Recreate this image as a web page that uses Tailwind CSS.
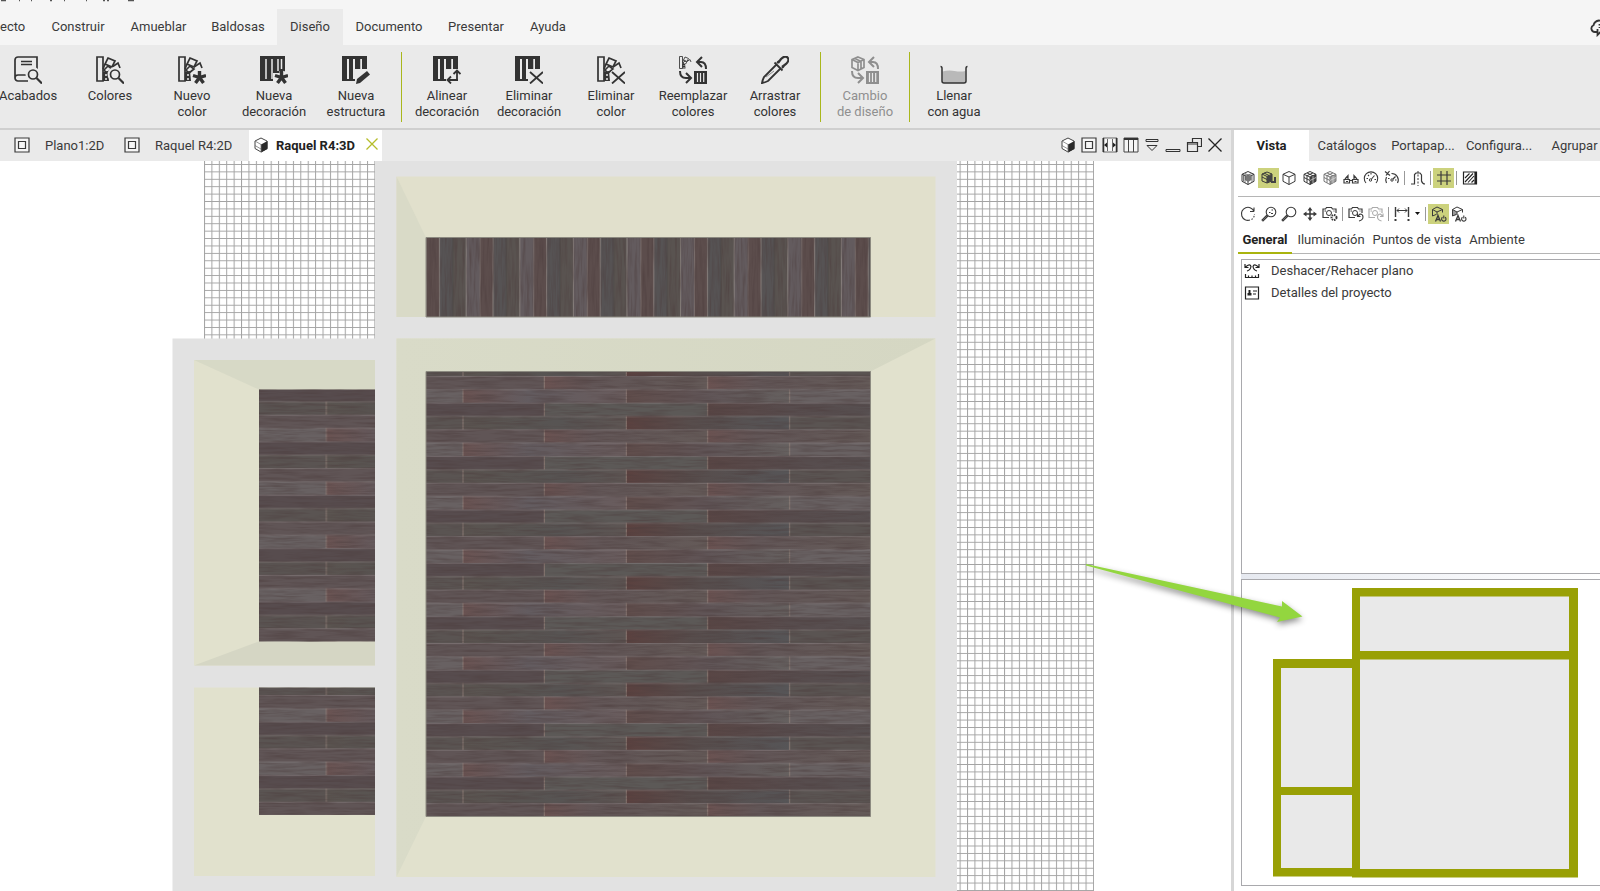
<!DOCTYPE html>
<html lang="es">
<head>
<meta charset="utf-8">
<title>Raquel R4:3D</title>
<script src="https://cdn.jsdelivr.net/npm/@tailwindcss/browser@4"></script>
</head>
<body class="bg-white font-['Roboto','Noto_Sans',sans-serif] text-[13px] leading-4 text-[#3a3a3a]">

<!-- Shared icon shapes -->
<svg class="hidden" aria-hidden="true">
  <defs>
    <symbol id="fan" viewBox="0 0 28 28">
      <g fill="none" stroke="currentColor" stroke-width="1.7">
        <path d="M1 1h6v24H1z"/>
        <path d="M12 2l7 3-3 6-7-3z"/>
        <path d="M9 8l-2 5M16 11l6-4 2 5"/>
        <path d="M8 14l4-4 4 3-5 4z"/>
      </g>
      <path d="M7 16l5-1 1 10H7z" fill="currentColor"/>
      <circle cx="10" cy="19" r="1" fill="#eaeaea"/><circle cx="10" cy="23" r="1" fill="#eaeaea"/>
    </symbol>
    <symbol id="planks" viewBox="0 0 28 28">
      <path d="M0 0h25v13h-5v-10h-1v10h-6V25H0z" fill="currentColor"/>
      <path d="M6 3v20M12 3v20" stroke="#eaeaea" stroke-width="2"/>
      <path d="M19 3v10" stroke="#eaeaea" stroke-width="1.5"/>
    </symbol>
    <symbol id="lens" viewBox="0 0 28 28">
      <circle cx="19" cy="18.500" r="5.500" fill="#eaeaea" stroke="#eaeaea" stroke-width="4"/>
      <circle cx="19" cy="18.500" r="4.500" fill="#eaeaea" stroke="currentColor" stroke-width="1.700"/>
      <path d="M22.500 22l5.500 5.500" stroke="currentColor" stroke-width="2.200"/>
    </symbol>
    <symbol id="star" viewBox="0 0 28 28">
      <path d="M21.500 15v13M15 19.500l13 4M28 19.500l-13 4M17.500 27l8-11" stroke="#eaeaea" stroke-width="4"/>
      <path d="M21.500 21.500V15M21.500 21.500l-6.500-2M21.500 21.500l6.500-2M21.500 21.500l-4 5.500M21.500 21.500l4 5.500" stroke="currentColor" stroke-width="3.400"/>
    </symbol>
    <symbol id="cross" viewBox="0 0 28 28">
      <path d="M15 15l13 13M28 15L15 28" stroke="#eaeaea" stroke-width="4"/>
      <path d="M15 16l13 11.500M28 16L15 27.500" stroke="currentColor" stroke-width="1.800"/>
    </symbol>
    <symbol id="swap" viewBox="0 0 28 28">
      <g fill="none" stroke="currentColor" stroke-width="2">
        <path d="M23 1l-5 5 5 5M18 6h4q5 0 5 7"/>
        <path d="M1 15q0 7 6 7h5M7 17l5 5-5 5"/>
      </g>
      <path d="M15 15h13v13H15z" fill="currentColor"/>
      <path d="M18.500 17v9M21.500 17v9M24.700 17v9" stroke="#eaeaea" stroke-width="1.200"/>
    </symbol>
    <symbol id="cubeSolid" viewBox="0 0 16 16">
      <path d="M8 1l6 3v7.500L8 15l-6-3.500V4z" fill="#fff" stroke="#444" stroke-width="1"/>
      <path d="M8 7.500l6.500-3.500v8L8 15.500z" fill="#2a2a2a"/>
      <path d="M2 4l6 3.500V15M2 8.500l6 3.500" fill="none" stroke="#777" stroke-width=".8"/>
    </symbol>
    <symbol id="frame2d" viewBox="0 0 16 16">
      <path d="M1 1h14v14H1zM4.500 4.500h7v7h-7z" fill="#f6f6f6" stroke="#3a3a3a" stroke-width="1.200"/>
    </symbol>
    <symbol id="cube" viewBox="0 0 16 16">
      <path d="M8 1.500l6 2.800v7L8 14.500l-6-3.200v-7zM2 4.300l6 2.700 6-2.700M8 7v7.500" fill="none" stroke="currentColor" stroke-width="1"/>
    </symbol>
    <symbol id="cam" viewBox="0 0 16 16">
      <path d="M1 12V3h2.500L4.500 1.500h5L10.500 3H14v4M1 11.500h6" fill="none" stroke="currentColor" stroke-width="1.200"/>
      <circle cx="7" cy="7" r="2.500" fill="none" stroke="currentColor"/>
      <path d="M2.500 5h1.500M11.500 5h1" stroke="currentColor"/>
    </symbol>
    <symbol id="cubeAuto" viewBox="0 0 16 16">
      <path d="M5 8.500L1.500 10V3.500L6 1l5.500 2.500v3M1.500 3.500L6 6l5.500-2.500M6 6v3" fill="none" stroke="currentColor" stroke-width="1"/>
      <path d="M4.500 15.500L7 9.500l2.500 6M5.500 13.500h3" fill="none" stroke="currentColor" stroke-width="1.300"/>
      <path d="M11.500 11.200a2.200 2.200 0 1 0 2.600 0M12.800 9.500v3" fill="none" stroke="currentColor" stroke-width="1.100"/>
    </symbol>
  </defs>
</svg>

<div class="relative flex h-screen flex-col overflow-hidden">

  <header class="flex h-[45px] shrink-0 flex-col bg-[#f5f5f5]">
    <svg class="h-[9px] w-[140px] shrink-0" viewBox="0 0 140 9" aria-hidden="true"><path d="M1 .5h5M19 .5h1M31 .5h1M50 .5h2M64 .5h1M86 .5h1M103 .5h2M107 .5h2M128 .5h6" stroke="#555" stroke-width="1.500"/></svg>
    <div class="flex min-h-0 flex-1 items-stretch justify-between overflow-hidden">
      <nav class="flex">
        <button class="w-[38px] text-left">ecto</button>
        <button class="w-[80px]">Construir</button>
        <button class="w-[81px]">Amueblar</button>
        <button class="w-[78px]">Baldosas</button>
        <button class="w-[66px] bg-[#eaeaea]">Diseño</button>
        <button class="w-[92px]">Documento</button>
        <button class="w-[82px]">Presentar</button>
        <button class="w-[62px]">Ayuda</button>
      </nav>
      <button class="w-[10px] overflow-hidden" aria-label="Nube"><svg class="h-5 w-5" viewBox="0 0 20 20" fill="none" stroke="#333" stroke-width="1.800"><path d="M7 15H5a3.500 3.500 0 0 1-1.500-6.700Q4.500 4 9 3.500 14 3.500 15 7M7.500 12v6l4-4"/><path d="M9.500 7v1.500M9.500 10v1"/></svg></button>
    </div>
  </header>

  <section class="flex h-[83px] shrink-0 overflow-hidden bg-[#eaeaea] text-[#333]" aria-label="Diseño">
    <button class="-ml-[13px] flex w-[82px] shrink-0 flex-col items-center gap-1 pt-[11px]">
      <svg class="h-7 w-7 shrink-0" viewBox="0 0 28 28"><path d="M14 25H4a3 3 0 0 1-3-3V4a3 3 0 0 1 3-3h19v12M1 22a3 3 0 0 1 3-3h9M7 5.500h11M7 8.500h11" fill="none" stroke="currentColor" stroke-width="1.700"/><use href="#lens"/></svg>
      <span>Acabados</span>
    </button>
    <button class="flex w-[82px] shrink-0 flex-col items-center gap-1 pt-[11px]">
      <svg class="h-7 w-7 shrink-0" viewBox="0 0 28 28"><use href="#fan"/><use href="#lens"/></svg>
      <span>Colores</span>
    </button>
    <button class="flex w-[82px] shrink-0 flex-col items-center gap-1 pt-[11px]">
      <svg class="h-7 w-7 shrink-0" viewBox="0 0 28 28"><use href="#fan"/><use href="#star"/></svg>
      <span>Nuevo<br>color</span>
    </button>
    <button class="flex w-[82px] shrink-0 flex-col items-center gap-1 pt-[11px]">
      <svg class="h-7 w-7 shrink-0" viewBox="0 0 28 28"><path d="M0 0h25v17H13v8H0z" fill="currentColor"/><path d="M6 3v20M12 3v20M18 3v12M21.500 3v10" stroke="#eaeaea" stroke-width="1.500"/><use href="#star"/></svg>
      <span>Nueva<br>decoración</span>
    </button>
    <button class="flex w-[82px] shrink-0 flex-col items-center gap-1 pt-[11px]">
      <svg class="h-7 w-7 shrink-0" viewBox="0 0 28 28"><use href="#planks"/><path d="M14 28l1-5L25 15l3 3.500L18 27z" fill="currentColor"/></svg>
      <span>Nueva<br>estructura</span>
    </button>
    <span class="mx-1 mt-[7px] h-[70px] w-px shrink-0 bg-[#a9b71c]"></span>
    <button class="flex w-[82px] shrink-0 flex-col items-center gap-1 pt-[11px]">
      <svg class="h-7 w-7 shrink-0" viewBox="0 0 28 28"><use href="#planks"/><path d="M24 24V14.500M20.500 18l3.500-3.500 3.500 3.500M25 24H14.500M18 20.500L14.500 24l3.500 3.500" fill="none" stroke="currentColor" stroke-width="1.800"/></svg>
      <span>Alinear<br>decoración</span>
    </button>
    <button class="flex w-[82px] shrink-0 flex-col items-center gap-1 pt-[11px]">
      <svg class="h-7 w-7 shrink-0" viewBox="0 0 28 28"><use href="#planks"/><use href="#cross"/></svg>
      <span>Eliminar<br>decoración</span>
    </button>
    <button class="flex w-[82px] shrink-0 flex-col items-center gap-1 pt-[11px]">
      <svg class="h-7 w-7 shrink-0" viewBox="0 0 28 28"><use href="#fan"/><use href="#cross"/></svg>
      <span>Eliminar<br>color</span>
    </button>
    <button class="flex w-[82px] shrink-0 flex-col items-center gap-1 pt-[11px]">
      <svg class="h-7 w-7 shrink-0" viewBox="0 0 28 28"><use href="#fan" width="14" height="14"/><use href="#swap"/></svg>
      <span>Reemplazar<br>colores</span>
    </button>
    <button class="flex w-[82px] shrink-0 flex-col items-center gap-1 pt-[11px]">
      <svg class="h-7 w-7 shrink-0" viewBox="0 0 28 28" fill="none" stroke="currentColor" stroke-width="1.800"><path d="M15.500 8.500L3 21q-1.500 3-2 6 3-.5 6-2L19.500 12.500M13.500 6.500l8 8M16 7l2-2M21 12l2-2"/><path d="M17 7l3-4q4-4 6.500-1.500T25 8l-4 3" stroke-width="2.200"/><path d="M5 21l8-6" stroke-width="1" stroke="#888"/></svg>
      <span>Arrastrar<br>colores</span>
    </button>
    <span class="mx-1 mt-[7px] h-[70px] w-px shrink-0 bg-[#a9b71c]"></span>
    <button class="flex w-20 shrink-0 flex-col items-center gap-1 pt-[11px] text-[#8f8f8f]" disabled>
      <svg class="h-7 w-7 shrink-0" viewBox="0 0 28 28"><path d="M7 1l6 2.500v8L7 14.500l-6-3v-8zM1 3.500L7 6.500l6-3M7 6.500v8M4 2.500l6 3v7" fill="none" stroke="currentColor" stroke-width="1.700"/><use href="#swap"/></svg>
      <span>Cambio<br>de diseño</span>
    </button>
    <span class="mx-1 mt-[7px] h-[70px] w-px shrink-0 bg-[#a9b71c]"></span>
    <button class="flex w-20 shrink-0 flex-col items-center gap-1 pt-[11px]">
      <svg class="h-7 w-7 shrink-0" viewBox="0 0 28 28"><path d="M2.500 15.500q6-1.500 12-.5t11 0V27h-23z" fill="#b9b9b9"/><path d="M.5 10.500q1.500 0 1.500 2V25q0 2 2 2h20q2 0 2-2V12.500q0-2 1.500-2" fill="none" stroke="currentColor" stroke-width="1.500"/></svg>
      <span>Llenar<br>con agua</span>
    </button>
  </section>

  <div class="flex min-h-0 flex-1 border-t-2 border-[#cfcfcf]">
    <main class="flex min-w-0 flex-1 flex-col">
      <div class="flex h-[31px] shrink-0 items-stretch justify-between bg-[#eaeaea]">
        <div class="flex items-stretch">
          <button class="flex w-[110px] items-center gap-[15px] pl-[14px]"><svg class="mb-px h-4 w-4" viewBox="0 0 16 16"><use href="#frame2d"/></svg>Plano1:2D</button>
          <button class="flex w-[139px] items-center gap-[15px] pl-[14px]"><svg class="mb-px h-4 w-4" viewBox="0 0 16 16"><use href="#frame2d"/></svg>Raquel R4:2D</button>
          <div class="flex w-[133px] items-center bg-white pl-1">
            <button class="flex flex-1 items-center gap-[7px] font-bold text-[#222]"><svg class="mb-px h-4 w-4" viewBox="0 0 16 16"><use href="#cubeSolid"/></svg>Raquel R4:3D</button>
            <button class="mr-1 mb-1" aria-label="Cerrar pestaña"><svg class="h-3 w-3" viewBox="0 0 12 12"><path d="M.5.5l11 11M11.500.5l-11 11" stroke="#b5bd2a" stroke-width="1.300"/></svg></button>
          </div>
        </div>
        <div class="flex items-center gap-[5px] pr-2 pb-px">
          <button aria-label="Vista 3D"><svg class="h-4 w-4" viewBox="0 0 16 16"><use href="#cubeSolid"/></svg></button>
          <button aria-label="Vista 2D"><svg class="h-4 w-4" viewBox="0 0 16 16"><use href="#frame2d"/></svg></button>
          <button aria-label="Alzado"><svg class="h-4 w-4" viewBox="0 0 16 16"><path d="M1 1h14v14H1z" fill="#f6f6f6" stroke="#666"/><path d="M1.500 1v14M14.500 1v14" stroke="#333" stroke-width="1.500"/><path d="M2 8l3-2.500v5zM14 8l-3-2.500v5z" fill="#222"/><path d="M5.500 2v12M10.500 2v12" stroke="#666"/></svg></button>
          <button aria-label="Columnas"><svg class="h-4 w-4" viewBox="0 0 16 16"><path d="M1 1h14v14H1zM5.500 2v13M10.500 2v13" fill="#f6f6f6" stroke="#444"/><path d="M1 2h14" stroke="#333" stroke-width="2"/></svg></button>
          <button aria-label="Mostrar más"><svg class="h-4 w-4" viewBox="0 0 16 16" fill="none" stroke="#333"><path d="M2 2.500h12v2H2zM3 8.500h10l-5 5z"/></svg></button>
          <button aria-label="Minimizar"><svg class="h-4 w-4" viewBox="0 0 16 16"><path d="M1 12.500h14v2H1z" fill="none" stroke="#333"/></svg></button>
          <button aria-label="Restaurar"><svg class="h-4 w-4" viewBox="0 0 16 16"><path d="M6.500 5V1.500h9v8H12M1.500 5.500h10v9h-10zM1.500 7h10" fill="none" stroke="#333" stroke-width="1.200"/></svg></button>
          <button aria-label="Cerrar"><svg class="h-4 w-4" viewBox="0 0 16 16"><path d="M1.500 1.500l13 13M14.500 1.500l-13 13" stroke="#222" stroke-width="1.300"/></svg></button>
        </div>
      </div>

      <!-- 3D view of the floor plan -->
      <svg class="min-h-0 w-full flex-1" viewBox="0 161 1231 730" preserveAspectRatio="xMinYMin slice" role="img" aria-label="Vista 3D de la planta">
        <defs>
          <pattern id="grid" x="204" y="164" width="7.408" height="7.408" patternUnits="userSpaceOnUse"><path d="M.5 0v7.408M0 .5h7.408" stroke="#a3a3a3" stroke-width="1"/></pattern>
          <linearGradient id="red1"><stop offset="0" stop-color="#6a5251"/><stop offset=".3" stop-color="#625657"/><stop offset="1" stop-color="#645a58"/></linearGradient>
          <linearGradient id="red2"><stop offset="0" stop-color="#5b413f"/><stop offset=".4" stop-color="#574d4c"/><stop offset="1" stop-color="#565557"/></linearGradient>
          <linearGradient id="mix"><stop offset="0" stop-color="#604d4b"/><stop offset=".5" stop-color="#605557"/><stop offset="1" stop-color="#65605f"/></linearGradient>
          <linearGradient id="cool"><stop offset="0" stop-color="#6a5352"/><stop offset=".4" stop-color="#635c60"/><stop offset="1" stop-color="#695c5d"/></linearGradient>
          <linearGradient id="grey"><stop offset="0" stop-color="#5a5450"/><stop offset=".6" stop-color="#575453"/><stop offset="1" stop-color="#5d5553"/></linearGradient>
          <linearGradient id="dark"><stop offset="0" stop-color="#594645"/><stop offset=".5" stop-color="#574c4d"/><stop offset="1" stop-color="#575051"/></linearGradient>
          <pattern id="wood" x="426" y="376" width="489.900" height="53.400" patternUnits="userSpaceOnUse">
            <rect width="490" height="54" fill="#605556"/>
            <rect x="118.300" width="163.300" height="13.400" fill="url(#red1)"/><rect x="281.600" width="163.300" height="13.400" fill="url(#red1)"/>
            <rect y="13.350" width="490" height="13.400" fill="#686162"/>
            <rect x="37" y="13.350" width="163.300" height="13.400" fill="url(#cool)"/><rect x="200.300" y="13.350" width="163.300" height="13.400" fill="url(#mix)"/>
            <rect y="26.700" width="490" height="13.400" fill="#574c4e"/>
            <rect x="118.300" y="26.700" width="163.300" height="13.400" fill="#5c5957"/><rect x="281.600" y="26.700" width="163.300" height="13.400" fill="url(#dark)"/>
            <rect y="40.050" width="490" height="13.400" fill="#5a5452"/>
            <rect x="37" y="40.050" width="163.300" height="13.400" fill="url(#grey)"/><rect x="200.300" y="40.050" width="163.300" height="13.400" fill="url(#red2)"/>
            <path d="M0 .5h490M0 13.800h490M0 27.200h490M0 40.500h490" stroke="#91878a" stroke-opacity=".45"/>
            <path d="M118.300 0v13.400M281.600 0v13.400M444.900 0v13.400M118.300 26.700v13.400M281.600 26.700v13.400M444.900 26.700v13.400M37 13.400v13.400M200.300 13.400v13.400M363.600 13.400v13.400M37 40v13.400M200.300 40v13.400M363.600 40v13.400" stroke="#94827a" stroke-opacity=".8"/>
          </pattern>
          <pattern id="woodLeft" href="#wood" x="289.300" y="414.700"/>
          <pattern id="woodLow" href="#wood" x="289.300" y="695"/>
          <pattern id="woodUp" x="426" y="237" width="53.600" height="82" patternUnits="userSpaceOnUse">
            <rect width="13.400" height="82" fill="#5c4d4c"/><rect x="13.400" width="13.400" height="82" fill="#565354"/><rect x="26.800" width="13.400" height="82" fill="#595350"/><rect x="40.200" width="13.400" height="82" fill="#635b5e"/>
            <path d="M.5 0v82M13.500 0v82M40.200 0v82" stroke="#8a807e" stroke-opacity=".6"/>
            <path d="M26.800 0v82" stroke="#454140" stroke-opacity=".6"/>
          </pattern>
          <filter id="grainH" x="0" y="0" width="1" height="1" color-interpolation-filters="sRGB"><feTurbulence type="fractalNoise" baseFrequency=".03 .4" numOctaves="3" seed="4"/><feColorMatrix values="0 0 0 0 .3  0 0 0 0 .24  0 0 0 0 .24  1.1 0 0 0 -.42"/></filter>
          <filter id="grainV" x="0" y="0" width="1" height="1" color-interpolation-filters="sRGB"><feTurbulence type="fractalNoise" baseFrequency=".4 .03" numOctaves="3" seed="9"/><feColorMatrix values="0 0 0 0 .3  0 0 0 0 .24  0 0 0 0 .24  1.1 0 0 0 -.42"/></filter>
          <linearGradient id="topWall" x1="0" y1="0" x2="1" y2="0"><stop offset="0" stop-color="#d9dbc8"/><stop offset="1" stop-color="#d5d7c3"/></linearGradient>
        </defs>
        <rect y="161" width="1231" height="730" fill="#fff"/>
        <path d="M204 161h171v178H204zM957 161h137v730H957z" fill="url(#grid)"/>
        <path d="M375 161h582v730H172.500V338.500H375z" fill="#e2e2e2"/>
        <!-- upper room -->
        <path d="M396.500 176.500h539V317h-539z" fill="#e1e0cc"/>
        <path d="M396.500 176.500l29.500 61V317h-29.500z" fill="#d9dac7"/>
        <path d="M426 237.500h444.500V317H426z" fill="url(#woodUp)"/>
        <path d="M426 237.500h444.500V317H426z" filter="url(#grainV)"/>
        <!-- main room -->
        <path d="M396.500 338.500h539V877h-539z" fill="#e1e1cd"/>
        <path d="M396.500 338.500h539l-65 33H426V816.500L396.500 877z" fill="url(#topWall)"/>
        <path d="M426 371.500h444.500v445H426z" fill="url(#wood)"/>
        <path d="M426 371.500h444.500v445H426z" filter="url(#grainH)"/>
        <path d="M426 371.500h444.500v445H426zM426 237.500h444.500V317H426z" fill="none" stroke="#8c8a80"/>
        <!-- left room -->
        <path d="M194 360h181v305.500H194z" fill="#e1e1cd"/>
        <path d="M194 360h181v29.500H259z" fill="#d7d9c6"/>
        <path d="M194 665.500l65-24h116v24z" fill="#d5d6c4"/>
        <path d="M259 389.500h116v252H259z" fill="url(#woodLeft)"/>
        <path d="M259 389.500h116v252H259z" filter="url(#grainH)"/>
        <!-- lower left room -->
        <path d="M194 687.500h181V876H194z" fill="#e1e1cd"/>
        <path d="M259 687.500h116V815H259z" fill="url(#woodLow)"/>
        <path d="M259 687.500h116V815H259z" filter="url(#grainH)"/>
      </svg>
    </main>

    <aside class="flex w-[369px] shrink-0 flex-col border-l-[3px] border-[#d6d6d6] bg-white">
      <div class="flex h-[31px] shrink-0 bg-[#eaeaea]">
        <button class="w-[75px] shrink-0 bg-white font-bold text-[#222]">Vista</button>
        <button class="w-[76px] shrink-0">Catálogos</button>
        <button class="w-[76px] shrink-0">Portapap...</button>
        <button class="w-[76px] shrink-0">Configura...</button>
        <button class="min-w-0 flex-1 pl-3">Agrupar</button>
      </div>
      <div class="ml-1 flex h-9 shrink-0 items-center border-b border-[#b5b5b5] pb-px text-[#3a3a3a]">
        <button class="flex h-5 w-[20px] items-center justify-center" aria-label="Sólido"><svg class="h-4 w-4" viewBox="0 0 16 16"><use href="#cube"/><path d="M5 6l3-1.500L11.500 6v4L8 12l-3-2z" fill="#777"/><path d="M3.500 4.500v7M5 4v9M5 3.500L8 5l4-1.500M12 5v7" fill="none" stroke="#555" stroke-width=".8"/></svg></button>
        <button class="flex h-5 w-[21px] items-center justify-center bg-[#ccd27d]" aria-label="Sombreado"><svg class="h-4 w-4" viewBox="0 0 16 16"><path d="M1 4l5-2 5 2v7l-5 2-5-2zM1 4l5 2.500L11 4M6 6.500V13M3 3l5 2.500M1 7l5 2.500L11 7" fill="none" stroke="currentColor"/><path d="M6 6.500l5-2v6L6 13zM10 11h3V7h2v6h-5z" fill="#444"/></svg></button>
        <button class="flex h-5 w-[20px] items-center justify-center" aria-label="Alámbrico"><svg class="h-4 w-4" viewBox="0 0 16 16"><use href="#cube"/></svg></button>
        <button class="flex h-5 w-[21px] items-center justify-center" aria-label="Texturas"><svg class="h-4 w-4" viewBox="0 0 16 16"><path d="M8 7l6-2.700v7L8 14.500z" fill="#444"/><use href="#cube"/><path d="M2 7.500L8 10.500M5 2.900l6 2.900M11 2.900L5 5.700v7" fill="none" stroke="currentColor"/><path d="M11 6v7M8 10.500l6-3" stroke="#ddd" stroke-width=".7"/></svg></button>
        <button class="flex h-5 w-[20px] items-center justify-center text-[#777]" aria-label="Texturas claras"><svg class="h-4 w-4" viewBox="0 0 16 16"><path d="M8 7l6-2.700v7L8 14.500z" fill="#999"/><use href="#cube"/><path d="M2 7.500L8 10.500M5 2.900l6 2.900M11 2.900L5 5.700v7" fill="none" stroke="currentColor"/><path d="M11 6v7M8 10.500l6-3" stroke="#ddd" stroke-width=".7"/></svg></button>
        <button class="flex h-5 w-[21px] items-center justify-center" aria-label="Buscar vista"><svg class="h-4 w-4" viewBox="0 0 16 16" fill="none" stroke="currentColor" stroke-width="1.200"><path d="M1 9.500h5.500V13H1zM9.500 9.500H15V13H9.500zM6.500 10.500h3M2 9l3-3.500V9M14 9l-3-3.500V9M3 11.500h2M11.500 11.500h2"/></svg></button>
        <button class="flex h-5 w-[20px] items-center justify-center" aria-label="Velocidad"><svg class="h-4 w-4" viewBox="0 0 16 16" fill="none" stroke="currentColor"><path d="M3 13a6.700 6.700 0 1 1 10 0M8.500 9l3-3.500M3.500 8.500H5M5 5l1 1M8 3v1.500M11.500 9.500H13" stroke-width="1.100"/><circle cx="7.500" cy="10" r="1.200"/></svg></button>
        <button class="flex h-5 w-[21px] items-center justify-center" aria-label="Sin velocidad"><svg class="h-4 w-4" viewBox="0 0 16 16" fill="none" stroke="currentColor"><path d="M2.500 13a6.500 6.500 0 0 1 0-6M7.500 3.500A6.500 6.500 0 0 1 13.500 13M9 9l2.500-2.500M1 1.500l5 4M5.500 1L2 5.500M4 8.500h1.500M11 10h1.500" stroke-width="1.200"/><circle cx="8" cy="10" r="1.200"/></svg></button>
        <span class="mr-[2px] ml-[2px] h-[14px] w-px bg-[#999]"></span>
        <button class="flex h-5 w-[21px] items-center justify-center" aria-label="Sección"><svg class="h-4 w-4" viewBox="0 0 16 16" fill="none" stroke="currentColor"><path d="M1 14h3.500V4.500L6 3h4l1.500 2v6q1 3 3.500 3" stroke-width="1.200"/><path d="M8 1v15" stroke-dasharray="2 1.500"/></svg></button>
        <span class="mr-[2px] ml-[2px] h-[14px] w-px bg-[#999]"></span>
        <button class="flex h-5 w-[21px] items-center justify-center bg-[#ccd27d]" aria-label="Cuadrícula"><svg class="h-4 w-4" viewBox="0 0 16 16"><path d="M5 1v14M11 1v14M1 5h14M1 11h14" stroke="currentColor" stroke-width="1.200"/></svg></button>
        <span class="mr-[2px] ml-[2px] h-[14px] w-px bg-[#999]"></span>
        <button class="flex h-5 w-[21px] items-center justify-center" aria-label="Trama"><svg class="h-4 w-4" viewBox="0 0 16 16" fill="none" stroke="#222"><path d="M1.500 2h13v12h-13z" stroke-width="1.200"/><path d="M13.500 2v12" stroke-width="2.200"/><path d="M3 8l4.500-4.500M3 12l8-8.500M6 12.500l6-6.500M9.500 12.500L12 10" stroke-width="1.100"/></svg></button>
      </div>
      <div class="ml-1 flex h-[34px] shrink-0 items-center pb-px text-[#3a3a3a]">
        <button class="flex h-5 w-[20px] items-center justify-center" aria-label="Girar"><svg class="h-4 w-4" viewBox="0 0 16 16" fill="none" stroke="currentColor" stroke-width="1.100"><path d="M14 5.500H10M14 1.500v4A6.500 6.500 0 1 0 10 14"/><path d="M11.500 13.500A6.500 6.500 0 0 0 14.500 8" stroke-dasharray="1.500 1.500"/></svg></button>
        <button class="flex h-5 w-[21px] items-center justify-center" aria-label="Acercar"><svg class="h-4 w-4" viewBox="0 0 16 16" fill="none" stroke="currentColor" stroke-width="1.100"><circle cx="10" cy="6" r="4.800"/><path d="M6 9L1 14l1 1 5-5M8 6.500h1.500M10.500 4h1.500M10 7.500h2"/></svg></button>
        <button class="flex h-5 w-[20px] items-center justify-center" aria-label="Zoom"><svg class="h-4 w-4" viewBox="0 0 16 16" fill="none" stroke="currentColor" stroke-width="1.100"><circle cx="10" cy="6" r="4.800"/><path d="M6 9L1 14l1 1 5-5"/></svg></button>
        <button class="flex h-5 w-[21px] items-center justify-center" aria-label="Desplazar"><svg class="h-4 w-4" viewBox="0 0 16 16"><path d="M8 3v10M3 8h10" stroke="currentColor" stroke-width="1.500"/><path d="M8 1l2.500 3.500h-5zM8 15l2.500-3.500h-5zM1 8l3.500-2.500v5zM15 8l-3.500-2.500v5z" fill="currentColor"/></svg></button>
        <button class="flex h-5 w-[20px] items-center justify-center" aria-label="Ajustes de cámara"><svg class="h-4 w-4" viewBox="0 0 16 16"><use href="#cam"/><circle cx="12" cy="11.500" r="2.500" fill="none" stroke="currentColor" stroke-width="2" stroke-dasharray="1.500 .8"/></svg></button>
        <span class="mr-[2px] ml-[2px] h-[14px] w-px bg-[#999]"></span>
        <button class="flex h-5 w-[21px] items-center justify-center" aria-label="Vista anterior"><svg class="h-4 w-4" viewBox="0 0 16 16"><use href="#cam"/><path d="M9.500 7.500v3h3M9.500 10.500L12 8q3 0 3 3t-4 4" fill="none" stroke="currentColor" stroke-width="1.100"/></svg></button>
        <button class="flex h-5 w-[20px] items-center justify-center text-[#aaa]" aria-label="Vista siguiente" disabled><svg class="h-4 w-4" viewBox="0 0 16 16"><use href="#cam"/><path d="M15 7.500v3h-3M15 10.500L12.500 8q-3 0-3 3t4 4" fill="none" stroke="currentColor" stroke-width="1.100"/></svg></button>
        <span class="mr-[2px] ml-[2px] h-[14px] w-px bg-[#999]"></span>
        <button class="flex h-5 w-[21px] items-center justify-center" aria-label="Medir"><svg class="h-4 w-4" viewBox="0 0 16 16" stroke="currentColor"><path d="M1.500 1v10M14.500 1v10" stroke-width="1.400"/><path d="M1.500 13v2M14.500 13v2" stroke-width="2"/><path d="M3 4.500h10M5 2.500l-2 2 2 2M11 2.500l2 2-2 2" fill="none"/></svg></button>
        <button class="flex h-5 w-[11px] items-center justify-center" aria-label="Más medidas"><svg class="h-[3px] w-[5px]" viewBox="0 0 5 3"><path d="M0 0h5L2.500 3z" fill="#111"/></svg></button>
        <span class="mr-[2px] ml-[2px] h-[14px] w-px bg-[#999]"></span>
        <button class="flex h-5 w-[21px] items-center justify-center bg-[#ccd27d]" aria-label="Automático"><svg class="h-4 w-4" viewBox="0 0 16 16"><use href="#cubeAuto"/></svg></button>
        <button class="flex h-5 w-[20px] items-center justify-center" aria-label="Automático lateral"><svg class="h-4 w-4" viewBox="0 0 16 16"><path d="M1.500 3.500L6 6v3L1.500 10z" fill="#999"/><use href="#cubeAuto"/></svg></button>
      </div>
      <div class="ml-1 flex h-[23px] shrink-0 items-stretch border-b border-[#b5b5b5]">
        <button class="-mb-px w-[54px] border-b-2 border-[#a9b40e] pb-[3px] font-bold text-[#222]">General</button>
        <button class="w-[78px] pb-1">Iluminación</button>
        <button class="w-[94px] pb-1">Puntos de vista</button>
        <button class="w-[66px] pb-1">Ambiente</button>
      </div>
      <div class="mt-[5px] ml-[7px] flex h-[315px] shrink-0 flex-col gap-[6px] border border-r-0 border-[#a9a9ad] pt-[3px] pl-[2px]">
        <button class="flex items-center gap-[11px]"><svg class="h-4 w-4" viewBox="0 0 16 16" fill="none" stroke="#222" stroke-width="1.200"><path d="M1 1v3.500h3.500M1.500 4Q6 0 7 3.500 6.500 7 3 8M15 1v3.500h-3.500M14.500 4Q10 0 9 3.500 9.500 7 13 8M1.500 11v3.500h13V11M4.500 12.500v2M8 12.500v2M11.500 12.500v2"/></svg>Deshacer/Rehacer plano</button>
        <button class="flex items-center gap-[11px]"><svg class="h-4 w-4" viewBox="0 0 16 16"><path d="M1.500 2h13v12h-13z" fill="none" stroke="#222" stroke-width="1.200"/><path d="M4.500 5h2v3h1v2.500h-4V8h1zM9 5.500h4v1H9zM9 8.500h3v1H9z" fill="#222"/></svg>Detalles del proyecto</button>
      </div>
      <div class="ml-[7px] h-[5px] shrink-0 bg-linear-to-r from-[#e6e9f0] to-white"></div>
      <div class="mb-[5px] ml-[7px] min-h-0 flex-1 border border-r-0 border-[#a9a9ad]">
        <svg class="h-full w-full" viewBox="1242 580 358 305" preserveAspectRatio="xMinYMin meet" role="img" aria-label="Plano general">
          <path d="M1352 588h226v289.500h-226v-1h-79V659h79z" fill="#99a005"/>
          <path d="M1360 596.500h209V651h-209zM1360 659.500h209V869h-209zM1281 668h71v119h-71zM1281 795h71v73h-71z" fill="#e9e9e9"/>
        </svg>
      </div>
    </aside>
  </div>

  <!-- Callout arrow pointing at the overview plan -->
  <svg class="pointer-events-none absolute top-[555px] right-[280px] h-[90px] w-[240px]" viewBox="1080 555 240 90" aria-hidden="true">
    <path class="drop-shadow-[0_3px_3px_rgba(0,0,0,0.45)]" d="M1086 564L1282 606.500V601L1302.500 616.500 1277 622 1280 617.500 1086 565.500z" fill="#93d63f"/>
  </svg>
</div>
</body>
</html>
